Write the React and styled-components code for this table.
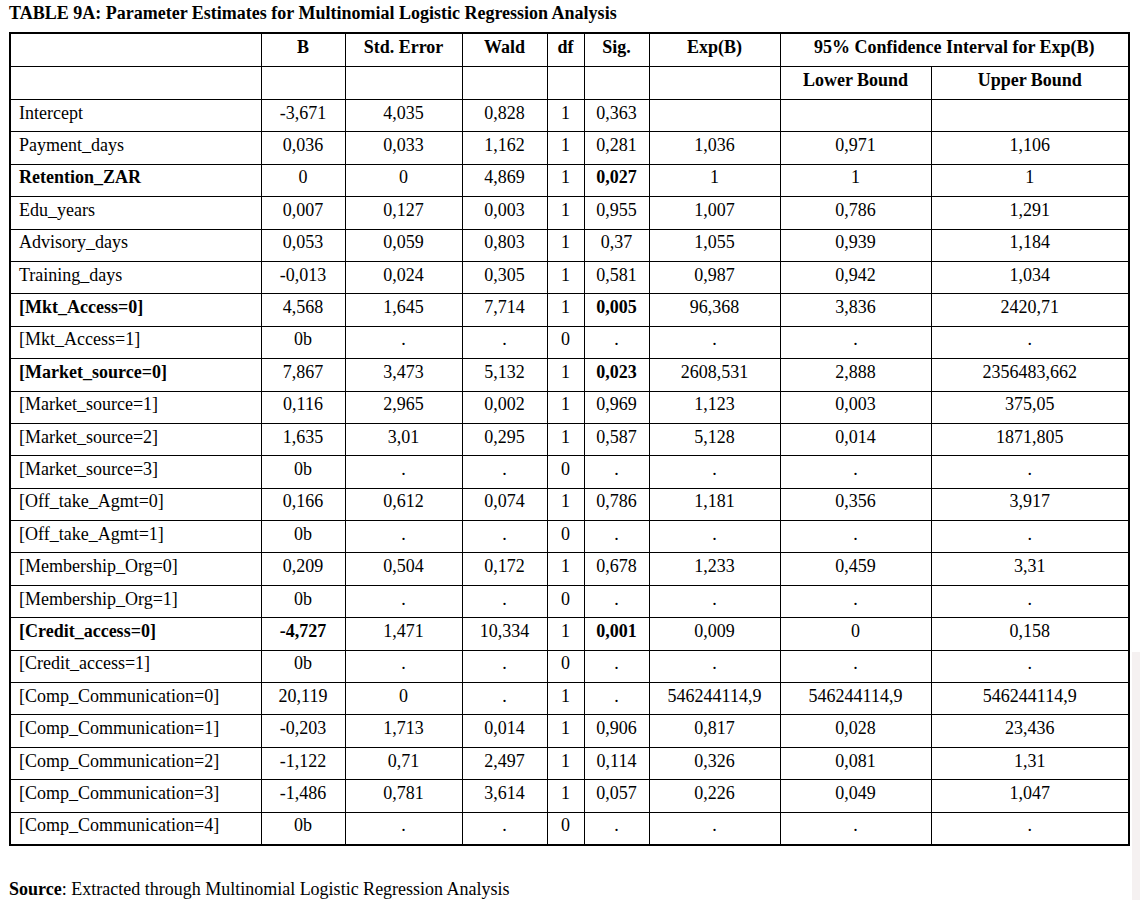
import React from "react";
import styled, { createGlobalStyle } from "styled-components";

const GlobalStyle = createGlobalStyle`
  html, body {
    margin: 0;
    padding: 0;
    background: #fff;
  }
  body {
    font-family: "Liberation Serif", "Times New Roman", serif;
    color: #000;
  }
`;

const Page = styled.div`
  position: relative;
  width: 1140px;
  height: 900px;
  box-sizing: border-box;
  padding: 3px 0 0 9px;
  overflow: hidden;
  &::after {
    content: "";
    position: absolute;
    left: 1132px;
    top: 652px;
    width: 8px;
    bottom: 0;
    background: #f5f1f1;
  }
`;

const Title = styled.h1`
  margin: 0;
  font-size: 18px;
  line-height: 20px;
  font-weight: bold;
  height: 29px;
`;

const Table = styled.table`
  border-collapse: collapse;
  table-layout: fixed;
  width: 1119px;
  border: 2px solid #000;
  font-size: 18px;
`;

const HeadCell = styled.th`
  border: 1px solid #000;
  height: 26px;
  padding: 0 0 6px;
  line-height: 20px;
  font-weight: bold;
  font-size: 18px;
  text-align: center;
  vertical-align: middle;
`;

const Cell = styled.td`
  border: 1px solid #000;
  height: 25.4px;
  line-height: 20px;
  padding: 0 0 6px ${(p) => (p.$label ? "8px" : "0")};
  text-align: ${(p) => (p.$label ? "left" : "center")};
  font-weight: ${(p) => (p.$bold ? "bold" : "normal")};
  vertical-align: middle;
  white-space: nowrap;
`;

const Source = styled.p`
  margin: 33px 0 0;
  font-size: 18px;
  line-height: 20px;
  b {
    font-weight: bold;
  }
`;

const widths = [251, 84, 117, 85, 37, 65, 131, 151, 198];

// [label, B, StdErr, Wald, df, Sig, Exp(B), Lower, Upper, bold cells]
const rows = [
  ["Intercept", "-3,671", "4,035", "0,828", "1", "0,363", "", "", ""],
  ["Payment_days", "0,036", "0,033", "1,162", "1", "0,281", "1,036", "0,971", "1,106"],
  ["Retention_ZAR", "0", "0", "4,869", "1", "0,027", "1", "1", "1", [0, 5]],
  ["Edu_years", "0,007", "0,127", "0,003", "1", "0,955", "1,007", "0,786", "1,291"],
  ["Advisory_days", "0,053", "0,059", "0,803", "1", "0,37", "1,055", "0,939", "1,184"],
  ["Training_days", "-0,013", "0,024", "0,305", "1", "0,581", "0,987", "0,942", "1,034"],
  ["[Mkt_Access=0]", "4,568", "1,645", "7,714", "1", "0,005", "96,368", "3,836", "2420,71", [0, 5]],
  ["[Mkt_Access=1]", "0b", ".", ".", "0", ".", ".", ".", "."],
  ["[Market_source=0]", "7,867", "3,473", "5,132", "1", "0,023", "2608,531", "2,888", "2356483,662", [0, 5]],
  ["[Market_source=1]", "0,116", "2,965", "0,002", "1", "0,969", "1,123", "0,003", "375,05"],
  ["[Market_source=2]", "1,635", "3,01", "0,295", "1", "0,587", "5,128", "0,014", "1871,805"],
  ["[Market_source=3]", "0b", ".", ".", "0", ".", ".", ".", "."],
  ["[Off_take_Agmt=0]", "0,166", "0,612", "0,074", "1", "0,786", "1,181", "0,356", "3,917"],
  ["[Off_take_Agmt=1]", "0b", ".", ".", "0", ".", ".", ".", "."],
  ["[Membership_Org=0]", "0,209", "0,504", "0,172", "1", "0,678", "1,233", "0,459", "3,31"],
  ["[Membership_Org=1]", "0b", ".", ".", "0", ".", ".", ".", "."],
  ["[Credit_access=0]", "-4,727", "1,471", "10,334", "1", "0,001", "0,009", "0", "0,158", [0, 1, 5]],
  ["[Credit_access=1]", "0b", ".", ".", "0", ".", ".", ".", "."],
  ["[Comp_Communication=0]", "20,119", "0", ".", "1", ".", "546244114,9", "546244114,9", "546244114,9"],
  ["[Comp_Communication=1]", "-0,203", "1,713", "0,014", "1", "0,906", "0,817", "0,028", "23,436"],
  ["[Comp_Communication=2]", "-1,122", "0,71", "2,497", "1", "0,114", "0,326", "0,081", "1,31"],
  ["[Comp_Communication=3]", "-1,486", "0,781", "3,614", "1", "0,057", "0,226", "0,049", "1,047"],
  ["[Comp_Communication=4]", "0b", ".", ".", "0", ".", ".", ".", "."],
];

const App = () => {
  return (
    <>
      <GlobalStyle />
      <Page>
        <Title>TABLE 9A: Parameter Estimates for Multinomial Logistic Regression Analysis</Title>
        <Table>
          <colgroup>
            {widths.map((w, i) => (
              <col key={i} style={{ width: w }} />
            ))}
          </colgroup>
          <thead>
            <tr>
              <HeadCell />
              <HeadCell>B</HeadCell>
              <HeadCell>Std. Error</HeadCell>
              <HeadCell>Wald</HeadCell>
              <HeadCell>df</HeadCell>
              <HeadCell>Sig.</HeadCell>
              <HeadCell>Exp(B)</HeadCell>
              <HeadCell colSpan={2}>95% Confidence Interval for Exp(B)</HeadCell>
            </tr>
            <tr>
              <HeadCell />
              <HeadCell />
              <HeadCell />
              <HeadCell />
              <HeadCell />
              <HeadCell />
              <HeadCell />
              <HeadCell>Lower Bound</HeadCell>
              <HeadCell>Upper Bound</HeadCell>
            </tr>
          </thead>
          <tbody>
            {rows.map((r) => {
              const bold = r[9] || [];
              return (
                <tr key={r[0]}>
                  {r.slice(0, 9).map((v, i) => (
                    <Cell key={i} $label={i === 0} $bold={bold.includes(i)}>
                      {v}
                    </Cell>
                  ))}
                </tr>
              );
            })}
          </tbody>
        </Table>
        <Source>
          <b>Source</b>: Extracted through Multinomial Logistic Regression Analysis
        </Source>
      </Page>
    </>
  );
};

export default App;
